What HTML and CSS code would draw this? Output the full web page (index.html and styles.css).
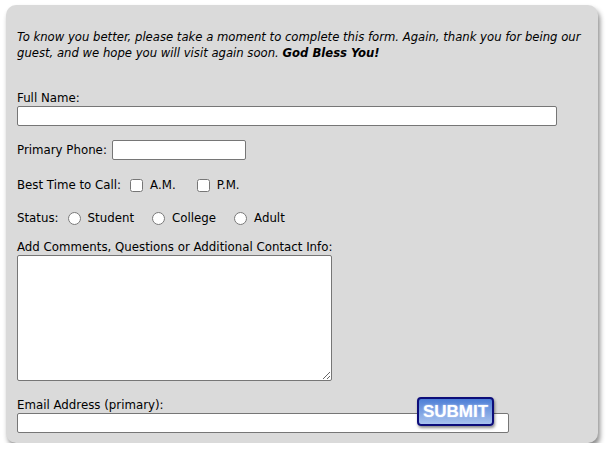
FILE: index.html
```html
<!DOCTYPE html>
<html lang="en">
<head>
    <meta charset="UTF-8">
    <title>Guest Form</title>
    <link rel="stylesheet" href="styles.css">
</head>
<body>

    <form class="guest-form" onsubmit="return false;">
        <p class="intro">To know you better, please take a moment to complete this form. Again, thank you for being our guest, and we hope you will visit again soon. <b>God Bless You!</b></p>

        <div class="field full-name">
            <label for="fullname">Full Name:</label>
            <input type="text" id="fullname" class="text-input wide">
        </div>

        <div class="row phone-row">
            <label for="phone">Primary Phone:</label>
            <input type="text" id="phone" class="text-input phone">
        </div>

        <div class="row choice-row">
            <span>Best Time to Call:</span>
            <input type="checkbox" id="am" class="first"><label for="am">A.M.</label>
            <input type="checkbox" id="pm"><label for="pm">P.M.</label>
        </div>

        <div class="row choice-row status-row">
            <span>Status:</span>
            <input type="radio" name="status" id="student" class="first"><label for="student">Student</label>
            <input type="radio" name="status" id="college"><label for="college">College</label>
            <input type="radio" name="status" id="adult"><label for="adult">Adult</label>
        </div>

        <div class="field comments">
            <label for="comments">Add Comments, Questions or Additional Contact Info:</label>
            <textarea id="comments"></textarea>
        </div>

        <div class="field email">
            <label for="email">Email Address (primary):</label>
            <input type="text" id="email" class="text-input email-input">
            <input type="submit" value="SUBMIT" class="submit-btn">
        </div>
    </form>

</body>
</html>
```

FILE: styles.css
```css
/* Core styles */
body {
    margin: 0;
    background: #fff;
    font-family: "DejaVu Sans", Verdana, sans-serif;
    font-size: 11.8px;
    color: #000;
}

.guest-form {
    width: 592px;
    height: 438px;
    box-sizing: border-box;
    margin: 5px 0 0 6px;
    padding: 24px 11px 10px 11px;
    background-color: #dadada;
    border-radius: 10px;
    box-shadow: 2px 4px 5px rgba(0, 0, 0, 0.45);
}

.intro {
    margin: 0;
    font-size: 11.65px;
    line-height: 16px;
    font-style: italic;
}

.field label,
.row {
    line-height: 16px;
}

.field label {
    display: block;
}

.text-input {
    display: block;
    box-sizing: border-box;
    height: 20px;
    margin: 0;
    border: 1px solid #767676;
    border-radius: 2px;
    background: #fff;
}

.wide {
    width: 540px;
}

.full-name {
    margin-top: 29px;
}

.row {
    display: flex;
    align-items: center;
}

.phone-row {
    margin-top: 14px;
    height: 20px;
}

.phone {
    width: 134px;
    margin-left: 5px;
}

.choice-row {
    margin-top: 17px;
    height: 16px;
}

.choice-row input {
    width: 13px;
    height: 13px;
    margin: 0 7px 0 21px;
}

.choice-row input.first {
    margin-left: 9px;
}

.status-row {
    margin-top: 17px;
}

.status-row input {
    margin-left: 18px;
}

.comments {
    margin-top: 13px;
}

.comments textarea {
    display: block;
    box-sizing: border-box;
    width: 315px;
    height: 126px;
    margin: 0;
    border: 1px solid #767676;
    border-radius: 2px;
    resize: both;
}

.email {
    position: relative;
    margin-top: 16px;
}

.email-input {
    width: 492px;
}

.submit-btn {
    position: absolute;
    top: 0;
    left: 400px;
    width: 77px;
    height: 29px;
    padding: 0;
    font-family: "Liberation Sans", Arial, sans-serif;
    font-weight: bold;
    font-size: 17px;
    color: #fff;
    text-shadow: 0 0 2px #c8d8ff;
    background: linear-gradient(#4d7ed6, #a9c3ee);
    border: 2px solid #0d0d7a;
    border-radius: 4px;
    box-shadow: 1px 2px 3px rgba(0, 0, 0, 0.45);
    cursor: pointer;
}
```
